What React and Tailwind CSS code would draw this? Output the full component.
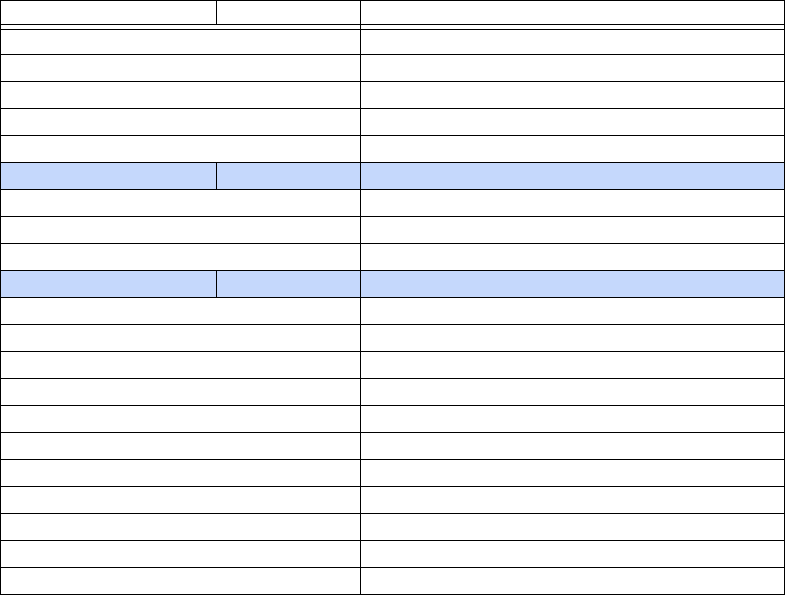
import React from 'react';

// row layout: 'h' = header (3 cells), 'w' = plain row (2 cells)
const rows = [
  'w', 'w', 'w', 'w',
  'h',
  'w', 'w', 'w',
  'h',
  'w', 'w', 'w', 'w', 'w', 'w', 'w', 'w', 'w', 'w', 'w',
];

function HeadRow({ blue, height }) {
  return (
    <div className={`flex ${height} border-b border-black ${blue ? 'bg-[#c5d8fc]' : 'bg-white'}`}>
      <div className="w-[216px] shrink-0 border-r border-black"></div>
      <div className="w-[144px] shrink-0 border-r border-black"></div>
      <div className="grow"></div>
    </div>
  );
}

function PlainRow({ height }) {
  return (
    <div className={`flex ${height} border-b border-black bg-white`}>
      <div className="w-[360px] shrink-0 border-r border-black"></div>
      <div className="grow"></div>
    </div>
  );
}

export default function App() {
  return (
    <div className="w-[785px] h-[595px] bg-white overflow-hidden" style={{ fontFamily: '"Liberation Sans", sans-serif' }}>
      <div className="w-[785px] border-l border-r border-t border-black">
        <HeadRow height="h-[24px]" />
        <PlainRow height="h-[5px]" />
        <PlainRow height="h-[25px]" />
        {rows.map((r, i) =>
          r === 'h' ? (
            <HeadRow key={i} blue height="h-[27px]" />
          ) : (
            <PlainRow key={i} height="h-[27px]" />
          )
        )}
      </div>
    </div>
  );
}
